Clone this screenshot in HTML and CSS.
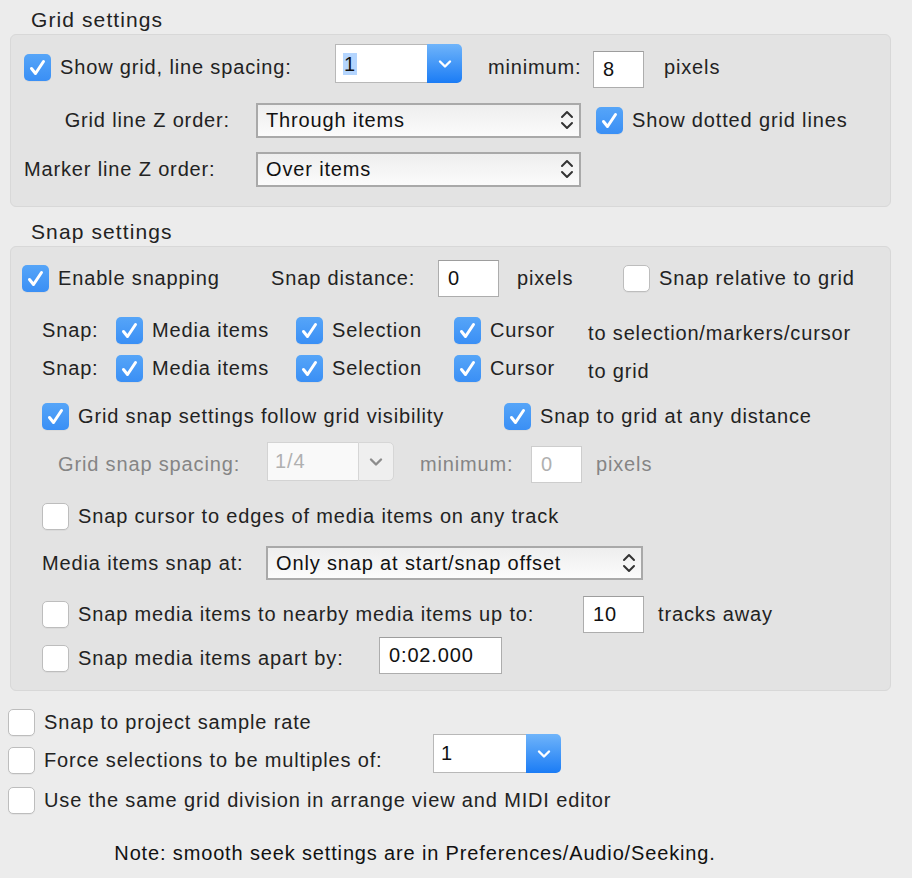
FILE: index.html
```html
<!doctype html>
<html lang="en">

	<head>
		<meta charset="UTF-8" />
		<title>Snap/Grid Settings</title>
		<link rel="stylesheet" href="styles.css">
	</head>

	<body>
		<section id="prefs">
			<div class="title">Grid settings</div>
			<div class="group grid-group">
				<div class="row">
					<span class="cb on"><svg viewBox="0 0 27 27"><path d="M7.5 14.5 L11.5 19.5 L19.5 7.5" /></svg></span>
					<span class="lbl w-showgrid">Show grid, line spacing:</span>
					<div class="combo up">
						<div class="combo-field"><span class="sel">1</span></div>
						<div class="combo-btn"><svg viewBox="0 0 14 10"><path d="M2 2.5 L7 7.5 L12 2.5" /></svg></div>
					</div>
					<span class="lbl w-min">minimum:</span>
					<div class="field f-min down">8</div>
					<span class="lbl after">pixels</span>
				</div>
				<div class="row row2">
					<span class="lbl w-zorder">Grid line Z order:</span>
					<div class="stepper s-zorder">
						<span>Through items</span>
						<svg viewBox="0 0 16 24"><path d="M3 9 L8 4 L13 9 M3 15 L8 20 L13 15" /></svg>
					</div>
					<span class="cb on gap-left"><svg viewBox="0 0 27 27"><path d="M7.5 14.5 L11.5 19.5 L19.5 7.5" /></svg></span>
					<span class="lbl">Show dotted grid lines</span>
				</div>
				<div class="row row3">
					<span class="lbl w-zorder">Marker line Z order:</span>
					<div class="stepper s-zorder">
						<span>Over items</span>
						<svg viewBox="0 0 16 24"><path d="M3 9 L8 4 L13 9 M3 15 L8 20 L13 15" /></svg>
					</div>
				</div>
			</div>

			<div class="title snap">Snap settings</div>
			<div class="group snap-group">
				<div class="row">
					<span class="cb on"><svg viewBox="0 0 27 27"><path d="M7.5 14.5 L11.5 19.5 L19.5 7.5" /></svg></span>
					<span class="lbl w-enable">Enable snapping</span>
					<span class="lbl w-dist">Snap distance:</span>
					<div class="field f-dist">0</div>
					<span class="lbl w-px">pixels</span>
					<span class="cb"></span>
					<span class="lbl">Snap relative to grid</span>
				</div>
				<div class="row short first-snap indent">
					<span class="lbl w-snap">Snap:</span>
					<span class="cb on"><svg viewBox="0 0 27 27"><path d="M7.5 14.5 L11.5 19.5 L19.5 7.5" /></svg></span>
					<span class="lbl w-media">Media items</span>
					<span class="cb on"><svg viewBox="0 0 27 27"><path d="M7.5 14.5 L11.5 19.5 L19.5 7.5" /></svg></span>
					<span class="lbl w-selection">Selection</span>
					<span class="cb on"><svg viewBox="0 0 27 27"><path d="M7.5 14.5 L11.5 19.5 L19.5 7.5" /></svg></span>
					<span class="lbl w-cursor">Cursor</span>
					<span class="lbl low">to selection/markers/cursor</span>
				</div>
				<div class="row short indent">
					<span class="lbl w-snap">Snap:</span>
					<span class="cb on"><svg viewBox="0 0 27 27"><path d="M7.5 14.5 L11.5 19.5 L19.5 7.5" /></svg></span>
					<span class="lbl w-media">Media items</span>
					<span class="cb on"><svg viewBox="0 0 27 27"><path d="M7.5 14.5 L11.5 19.5 L19.5 7.5" /></svg></span>
					<span class="lbl w-selection">Selection</span>
					<span class="cb on"><svg viewBox="0 0 27 27"><path d="M7.5 14.5 L11.5 19.5 L19.5 7.5" /></svg></span>
					<span class="lbl w-cursor">Cursor</span>
					<span class="lbl low">to grid</span>
				</div>
				<div class="row indent follow">
					<span class="cb on"><svg viewBox="0 0 27 27"><path d="M7.5 14.5 L11.5 19.5 L19.5 7.5" /></svg></span>
					<span class="lbl w-follow">Grid snap settings follow grid visibility</span>
					<span class="cb on"><svg viewBox="0 0 27 27"><path d="M7.5 14.5 L11.5 19.5 L19.5 7.5" /></svg></span>
					<span class="lbl">Snap to grid at any distance</span>
				</div>
				<div class="row indent disabled">
					<span class="lbl w-spacing">Grid snap spacing:</span>
					<div class="combo off up-small">
						<div class="combo-field">1/4</div>
						<div class="combo-btn"><svg viewBox="0 0 14 10"><path d="M2 2.5 L7 7.5 L12 2.5" /></svg></div>
					</div>
					<span class="lbl w-min2">minimum:</span>
					<div class="field f-min">0</div>
					<span class="lbl after2">pixels</span>
				</div>
				<div class="row indent edges">
					<span class="cb"></span>
					<span class="lbl">Snap cursor to edges of media items on any track</span>
				</div>
				<div class="row indent snapat">
					<span class="lbl w-snapat">Media items snap at:</span>
					<div class="stepper s-snapat">
						<span>Only snap at start/snap offset</span>
						<svg viewBox="0 0 16 24"><path d="M3 9 L8 4 L13 9 M3 15 L8 20 L13 15" /></svg>
					</div>
				</div>
				<div class="row indent nearby">
					<span class="cb"></span>
					<span class="lbl w-nearby">Snap media items to nearby media items up to:</span>
					<div class="field f-dist">10</div>
					<span class="lbl after2">tracks away</span>
				</div>
				<div class="row indent apart">
					<span class="cb"></span>
					<span class="lbl w-apart">Snap media items apart by:</span>
					<div class="field f-time up">0:02.000</div>
				</div>
			</div>

			<div class="bottom">
				<div class="row short">
					<span class="cb"></span>
					<span class="lbl">Snap to project sample rate</span>
				</div>
				<div class="row short">
					<span class="cb"></span>
					<span class="lbl w-force">Force selections to be multiples of:</span>
					<div class="combo up-big">
						<div class="combo-field">1</div>
						<div class="combo-btn"><svg viewBox="0 0 14 10"><path d="M2 2.5 L7 7.5 L12 2.5" /></svg></div>
					</div>
				</div>
				<div class="row short same">
					<span class="cb"></span>
					<span class="lbl">Use the same grid division in arrange view and MIDI editor</span>
				</div>
			</div>

			<p class="note">Note: smooth seek settings are in Preferences/Audio/Seeking.</p>
		</section>
	</body>

</html>
```

FILE: styles.css
```css
* {
	margin: 0;
	padding: 0;
	box-sizing: border-box;
}

body {
	background: #ececec;
	font-family: "Liberation Sans", Arial, sans-serif;
	font-size: 20px;
	letter-spacing: 0.85px;
	color: #222;
}

#prefs {
	width: 912px;
	height: 878px;
	overflow: hidden;
}

.title {
	height: 34px;
	padding: 7px 0 0 31px;
	font-size: 21px;
	letter-spacing: 1.1px;
	line-height: 26px;
}

.title.snap {
	height: 39px;
	padding-top: 12px;
}

.group {
	margin-left: 10px;
	width: 881px;
	background: #e3e3e3;
	border: 1px solid #d8d8d8;
	border-radius: 6px;
}

.grid-group {
	height: 173px;
	padding: 8px 0 0 13px;
}

.snap-group {
	height: 445px;
	padding: 7px 0 0 11px;
}

.row {
	display: flex;
	align-items: center;
	height: 48px;
	white-space: nowrap;
}

.row.short {
	height: 38px;
}

.row2 {
	margin-top: 5px;
}

.row3 {
	margin-top: 1px;
}

.indent {
	padding-left: 20px;
}

.first-snap {
	margin-top: 9px;
}

.follow {
	margin-top: 5px;
}

.disabled {
	padding-left: 36px;
	color: #858585;
}

.edges {
	margin-top: 4px;
}

.snapat {
	height: 46px;
}

.nearby {
	margin-top: 4px;
}

.apart {
	height: 40px;
}

/* checkboxes */
.cb {
	flex: none;
	width: 27px;
	height: 27px;
	margin-right: 9px;
	border-radius: 5px;
	background: #fff;
	border: 1px solid #bdbdbd;
	box-shadow: 0 1px 0 rgba(0, 0, 0, 0.04);
	display: flex;
}

.cb.on {
	border: none;
	background: linear-gradient(#56a5f8, #3a8ff5);
}

.cb svg {
	width: 27px;
	height: 27px;
}

.cb path {
	fill: none;
	stroke: #fff;
	stroke-width: 3;
	stroke-linecap: round;
	stroke-linejoin: round;
}

.cb.gap-left {
	margin-left: 15px;
}

/* labels */
.lbl {
	flex: none;
	display: block;
}

.low {
	margin-top: 6px;
}

.w-showgrid { width: 275px; }
.w-min { width: 105px; margin-left: 26px; }
.after { margin-left: 20px; }
.w-zorder { width: 206px; margin-right: 26px; text-align: right; }
.row3 .w-zorder { text-align: left; }

.w-enable { width: 213px; }
.w-dist { width: 167px; }
.w-px { width: 106px; margin-left: 18px; }

.w-snap { width: 74px; }
.w-media { width: 144px; }
.w-selection { width: 122px; }
.w-cursor { width: 98px; }

.w-follow { width: 426px; }
.w-spacing { width: 209px; }
.w-min2 { width: 111px; margin-left: 26px; }
.after2 { margin-left: 14px; }

.w-snapat { width: 224px; }
.w-nearby { width: 505px; }
.w-apart { width: 301px; }
.w-force { width: 389px; }

/* text fields */
.field {
	flex: none;
	height: 37px;
	background: #fff;
	border: 1px solid #adadad;
	border-top-color: #9d9d9d;
	padding-left: 9px;
	display: flex;
	align-items: center;
	color: #111;
}

.f-min { width: 51px; }
.f-dist { width: 61px; }
.f-time { width: 123px; }

.disabled .field {
	color: #b0b0b0;
	border-color: #cdcdcd;
}

.down { margin-top: 5px; }
.up { margin-bottom: 6px; }

/* combo boxes with a blue drop button */
.combo {
	flex: none;
	display: flex;
	height: 39px;
	width: 127px;
}

.combo.up { margin-bottom: 7px; }
.combo.up-small { margin-bottom: 5px; }
.combo.up-big { margin-bottom: 13px; width: 128px; }

.combo-field {
	flex: 1;
	background: #fff;
	border: 1px solid #b8b8b8;
	border-right: none;
	padding-left: 7px;
	display: flex;
	align-items: center;
	color: #111;
}

.sel {
	background: #b4d5fe;
	padding: 0 1px 0 1px;
	line-height: 22px;
}

.combo-btn {
	flex: none;
	width: 35px;
	border-radius: 0 5px 5px 0;
	background: linear-gradient(#6fb4fa, #1b7cf5);
	display: flex;
	align-items: center;
	justify-content: center;
}

.combo-btn svg {
	width: 14px;
	height: 10px;
}

.combo-btn path {
	fill: none;
	stroke: #fff;
	stroke-width: 2.4;
	stroke-linecap: round;
	stroke-linejoin: round;
}

.combo.off .combo-field {
	flex: none;
	width: 91px;
	background: #f9f9f9;
	border-color: #d3d3d3;
	color: #b0b0b0;
}

.combo.off .combo-btn {
	width: 36px;
	background: #efefef;
	border: 1px solid #d6d6d6;
}

.combo.off .combo-btn path {
	stroke: #8c8c8c;
}

/* popup menus with up/down arrows */
.stepper {
	flex: none;
	height: 35px;
	border: 2px solid #a9a9a9;
	background: linear-gradient(#eeeeee, #fbfbfb);
	display: flex;
	align-items: center;
	justify-content: space-between;
	padding: 0 4px 0 8px;
	color: #111;
}

.stepper svg {
	width: 16px;
	height: 24px;
}

.stepper path {
	fill: none;
	stroke: #333;
	stroke-width: 2;
	stroke-linecap: round;
	stroke-linejoin: round;
}

.s-zorder { width: 325px; }
.s-snapat { width: 377px; height: 34px; }

/* loose checkboxes under the snap group */
.bottom {
	margin-top: 12px;
	padding-left: 8px;
}

.same {
	margin-top: 2px;
}

.note {
	margin-top: 19px;
	width: 830px;
	text-align: center;
	line-height: 30px;
	color: #111;
}
```
